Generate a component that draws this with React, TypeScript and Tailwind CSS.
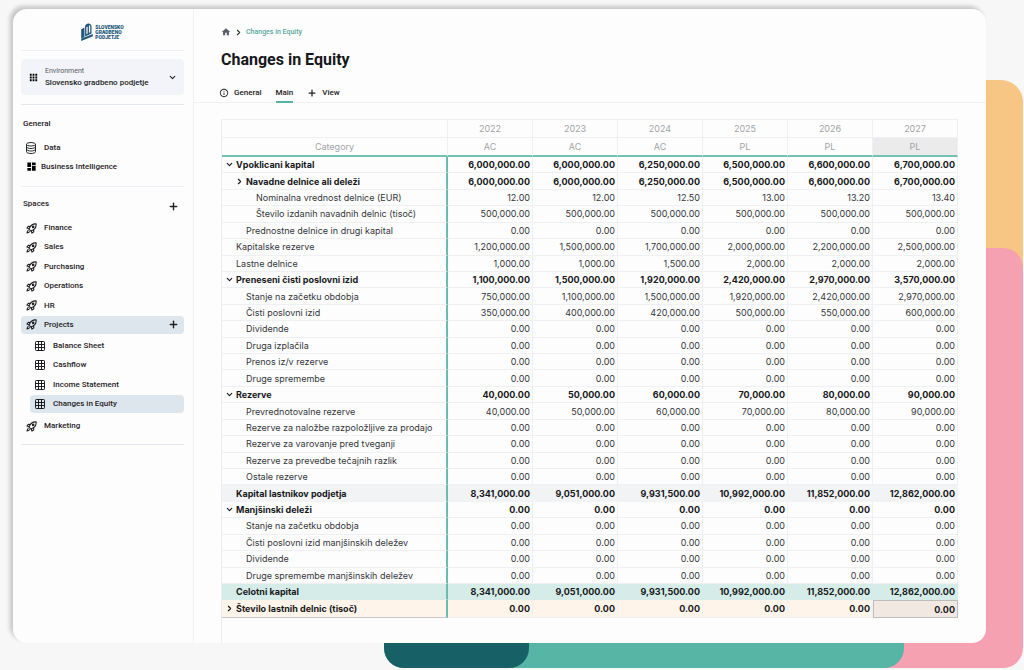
import React from "react";
import { MdApps, MdDashboard, MdHome, MdInfoOutline } from "react-icons/md";
import { ChevronDown, ChevronRight, Plus } from "lucide-react";

type Chevron = "open" | "closed";
type Tone = "plain" | "subtotal" | "total" | "note";

interface Row {
  label: string;
  level: 0 | 1 | 2;
  values: string[];
  bold?: boolean;
  chevron?: Chevron;
  tone?: Tone;
}

const zeros = ["0.00", "0.00", "0.00", "0.00", "0.00", "0.00"];
const equity = ["6,000,000.00", "6,000,000.00", "6,250,000.00", "6,500,000.00", "6,600,000.00", "6,700,000.00"];
const totals = ["8,341,000.00", "9,051,000.00", "9,931,500.00", "10,992,000.00", "11,852,000.00", "12,862,000.00"];

const rows: Row[] = [
  { label: "Vpoklicani kapital", level: 0, bold: true, chevron: "open", values: equity },
  { label: "Navadne delnice ali deleži", level: 1, bold: true, chevron: "closed", values: equity },
  { label: "Nominalna vrednost delnice (EUR)", level: 2, values: ["12.00", "12.00", "12.50", "13.00", "13.20", "13.40"] },
  { label: "Število izdanih navadnih delnic (tisoč)", level: 2, values: ["500,000.00", "500,000.00", "500,000.00", "500,000.00", "500,000.00", "500,000.00"] },
  { label: "Prednostne delnice in drugi kapital", level: 1, values: zeros },
  { label: "Kapitalske rezerve", level: 0, values: ["1,200,000.00", "1,500,000.00", "1,700,000.00", "2,000,000.00", "2,200,000.00", "2,500,000.00"] },
  { label: "Lastne delnice", level: 0, values: ["1,000.00", "1,000.00", "1,500.00", "2,000.00", "2,000.00", "2,000.00"] },
  { label: "Preneseni čisti poslovni izid", level: 0, bold: true, chevron: "open", values: ["1,100,000.00", "1,500,000.00", "1,920,000.00", "2,420,000.00", "2,970,000.00", "3,570,000.00"] },
  { label: "Stanje na začetku obdobja", level: 1, values: ["750,000.00", "1,100,000.00", "1,500,000.00", "1,920,000.00", "2,420,000.00", "2,970,000.00"] },
  { label: "Čisti poslovni izid", level: 1, values: ["350,000.00", "400,000.00", "420,000.00", "500,000.00", "550,000.00", "600,000.00"] },
  { label: "Dividende", level: 1, values: zeros },
  { label: "Druga izplačila", level: 1, values: zeros },
  { label: "Prenos iz/v rezerve", level: 1, values: zeros },
  { label: "Druge spremembe", level: 1, values: zeros },
  { label: "Rezerve", level: 0, bold: true, chevron: "open", values: ["40,000.00", "50,000.00", "60,000.00", "70,000.00", "80,000.00", "90,000.00"] },
  { label: "Prevrednotovalne rezerve", level: 1, values: ["40,000.00", "50,000.00", "60,000.00", "70,000.00", "80,000.00", "90,000.00"] },
  { label: "Rezerve za naložbe razpoložljive za prodajo", level: 1, values: zeros },
  { label: "Rezerve za varovanje pred tveganji", level: 1, values: zeros },
  { label: "Rezerve za prevedbe tečajnih razlik", level: 1, values: zeros },
  { label: "Ostale rezerve", level: 1, values: zeros },
  { label: "Kapital lastnikov podjetja", level: 0, bold: true, tone: "subtotal", values: totals },
  { label: "Manjšinski deleži", level: 0, bold: true, chevron: "open", values: zeros },
  { label: "Stanje na začetku obdobja", level: 1, values: zeros },
  { label: "Čisti poslovni izid manjšinskih deležev", level: 1, values: zeros },
  { label: "Dividende", level: 1, values: zeros },
  { label: "Druge spremembe manjšinskih deležev", level: 1, values: zeros },
  { label: "Celotni kapital", level: 0, bold: true, tone: "total", values: totals },
  { label: "Število lastnih delnic (tisoč)", level: 0, bold: true, chevron: "closed", tone: "note", values: zeros },
];

const columns = [
  { year: "2022", kind: "AC" },
  { year: "2023", kind: "AC" },
  { year: "2024", kind: "AC" },
  { year: "2025", kind: "PL" },
  { year: "2026", kind: "PL" },
  { year: "2027", kind: "PL" },
];

const indent = { 0: "pl-[2px]", 1: "pl-[12px]", 2: "pl-[22px]" };
const toneClass: Record<Tone, string> = {
  plain: "",
  subtotal: "bg-[#f2f3f5]",
  total: "bg-[#d5ece8]",
  note: "bg-[#fff4ea]",
};

function Logo() {
  return (
    <a href="#" className="flex items-center gap-[2px] text-[#205578]">
      <svg viewBox="0 0 36 56" className="h-[18px] w-[12px]" fill="currentColor" aria-hidden="true">
        <path d="M0 20 10 14v30L0 48z" />
        <path fillRule="evenodd" d="M12 9C14 3 20 0 26 2c4 1 6 5 6 9v22l-20 9zM16 13v22l4-2V11zM24 9v22l4-2V9c0-3-4-3-4 0z" />
        <path d="M0 49 36 34v7L0 56z" />
      </svg>
      <span className="pt-px text-[5px] leading-[5px] font-black">
        SLOVENSKO
        <br />
        GRADBENO
        <br />
        PODJETJE
      </span>
    </a>
  );
}

function DatabaseIcon() {
  return (
    <svg viewBox="0 0 20 24" className="h-3 w-[10px]" fill="none" stroke="currentColor" strokeWidth="1.9" aria-hidden="true">
      <ellipse cx="10" cy="4.500" rx="9" ry="3.500" />
      <path d="M1 4.500v15c0 2 4 3.500 9 3.500s9-1.500 9-3.500v-15" />
      <path d="M1 9.500c0 2 4 3.500 9 3.500s9-1.500 9-3.500M1 14.500c0 2 4 3.500 9 3.500s9-1.500 9-3.500" />
    </svg>
  );
}

function RocketIcon() {
  return (
    <svg
      viewBox="0 0 24 24"
      className="h-[11px] w-[11px] text-[#1c1d20]"
      fill="none"
      stroke="currentColor"
      strokeWidth="2.4"
      strokeLinejoin="round"
      aria-hidden="true"
    >
      <path d="M22 2c-6-.6-10.500 1.500-13.500 7L6.500 13.500l4 4L15 15.500C20.500 12.500 22.600 8 22 2z" />
      <path d="M9.500 7.500 5 7 2 11l5 1.500M16.500 14.500 17 19l-4 3-1.500-5" />
      <path d="M5.500 16C3 16.500 2.500 19 2.200 21.800 5 21.500 7.500 21 8 18.500" />
      <circle cx="15.500" cy="8.500" r="1.700" />
    </svg>
  );
}

function SheetIcon() {
  return (
    <svg viewBox="0 0 20 20" className="h-[10px] w-[10px] text-[#1c1d20]" fill="none" stroke="currentColor" strokeWidth="2" aria-hidden="true">
      <rect x="1" y="1" width="18" height="18" rx="1.500" />
      <path d="M7 1v18M13 1v18M1 7h18M1 13h18" />
    </svg>
  );
}

function SpaceLink({ label }: { label: string }) {
  return (
    <a href="#" className="flex h-[18px] items-center gap-[7px] pl-[5px]">
      <RocketIcon />
      {label}
    </a>
  );
}

function SheetLink({ label, active }: { label: string; active?: boolean }) {
  return (
    <a
      href="#"
      aria-current={active ? "page" : undefined}
      className={`flex h-[18px] items-center gap-2 rounded pl-[5px] ${active ? "bg-[#dde6ed]" : ""}`}
    >
      <SheetIcon />
      {label}
    </a>
  );
}

function Sidebar() {
  return (
    <aside className="w-[181px] shrink-0 border-r border-[#f0f1f4] pr-[9px] pl-2 text-[8px] leading-[10px] font-medium text-[#1f2124]">
      <div className="flex h-[42px] items-center justify-center border-b border-[#eceff5] pt-1">
        <Logo />
      </div>
      <div className="border-b border-[#e3e7ee] pt-2 pb-[9px]">
        <button className="flex h-9 w-full items-center rounded bg-[#f3f4f9] pr-[7px] pl-[7px] text-left">
          <MdApps className="h-[11px] w-[11px] text-black" />
          <span className="ml-[6px] flex-1 pb-px">
            <span className="block text-[7px] leading-[11px] font-normal text-[#555b66]">Environment</span>
            <span className="block leading-[11px] text-[#202226]">Slovensko gradbeno podjetje</span>
          </span>
          <ChevronDown className="h-[9px] w-[9px]" strokeWidth={3} />
        </button>
      </div>
      <nav aria-label="General" className="border-b border-[#eceff5] pt-[14px] pb-[10px]">
        <h2 className="pl-[2px]">General</h2>
        <div className="mt-[9px] flex flex-col">
          <a href="#" className="flex h-[19px] items-center gap-2 pl-[5px]">
            <DatabaseIcon />
            Data
          </a>
          <a href="#" className="flex h-[19px] items-center gap-[4px] pl-[5px]">
            <MdDashboard className="h-[11px] w-[11px] text-black" />
            Business Intelligence
          </a>
        </div>
      </nav>
      <nav aria-label="Spaces" className="border-b border-[#e3e7ee] pt-3 pb-[9px]">
        <div className="flex items-start justify-between pr-[5px] pl-[2px]">
          <h2>Spaces</h2>
          <button aria-label="Add space" className="pt-[2px]">
            <Plus className="h-[11px] w-[11px]" strokeWidth={3} />
          </button>
        </div>
        <div className="mt-[7px] flex h-[115px] flex-col justify-between">
          <SpaceLink label="Finance" />
          <SpaceLink label="Sales" />
          <SpaceLink label="Purchasing" />
          <SpaceLink label="Operations" />
          <SpaceLink label="HR" />
          <div className="flex items-center justify-between rounded bg-[#dde6ed] pr-[5px]">
            <SpaceLink label="Projects" />
            <button aria-label="Add to Projects">
              <Plus className="h-[11px] w-[11px]" strokeWidth={3} />
            </button>
          </div>
        </div>
        <div className="mt-[3px] ml-[9px] flex h-[76px] flex-col justify-between">
          <SheetLink label="Balance Sheet" />
          <SheetLink label="Cashflow" />
          <SheetLink label="Income Statement" />
          <SheetLink label="Changes in Equity" active />
        </div>
        <div className="mt-1">
          <SpaceLink label="Marketing" />
        </div>
      </nav>
    </aside>
  );
}

function PageHeader() {
  return (
    <header className="border-b border-[#f0f1f4] pl-[27px]">
      <nav aria-label="Breadcrumb" className="flex items-center gap-[3px] pt-[18px] text-[7px] leading-[10px] font-medium text-[#5aa79b]">
        <a href="#" aria-label="Home">
          <MdHome className="h-[10px] w-[10px] text-[#585d66]" />
        </a>
        <ChevronRight className="h-[9px] w-[9px] text-[#333]" strokeWidth={3} />
        <a href="#">Changes in Equity</a>
      </nav>
      <h1 className="mt-3 text-[16px] leading-[22px] font-bold text-[#17181b]">Changes in Equity</h1>
      <div className="mt-[10px] -mb-px flex h-[22px] text-[8px] leading-[10px] font-medium text-[#1f2124]">
        <button className="-ml-[2px] flex items-center gap-[5px] border-b-2 border-transparent pt-1">
          <MdInfoOutline className="h-[10px] w-[10px]" />
          General
        </button>
        <button className="ml-[14px] border-b-2 border-[#58b2a7] pt-1">Main</button>
        <button className="ml-[14px] flex items-center gap-[5px] border-b-2 border-transparent pt-1">
          <Plus className="h-[10px] w-[10px]" strokeWidth={3} />
          View
        </button>
      </div>
    </header>
  );
}

function EquityTable() {
  return (
    <table className="h-[499px] w-full table-fixed border-separate border-spacing-0 text-[9px] leading-[15px] text-[#34363a]">
      <colgroup>
        <col className="w-[226px]" />
        <col span={6} />
      </colgroup>
      <thead className="text-[#a3a4a7]">
        <tr className="h-[19px]">
          <th className="border-t border-r border-b border-[#eff0f4] p-0" />
          {columns.map((c) => (
            <th key={c.year} scope="col" className="border-t border-r border-b border-[#eff0f4] p-0 font-normal">
              {c.year}
            </th>
          ))}
        </tr>
        <tr className="h-[19px]">
          <th scope="col" className="border-r border-b-2 border-r-[#eff0f4] border-b-[#74c0b5] p-0 font-normal">
            Category
          </th>
          {columns.map((c, i) => (
            <th
              key={c.year}
              className={`border-r border-b-2 border-r-[#eff0f4] border-b-[#74c0b5] p-0 font-normal ${i === 5 ? "bg-[#ebebeb]" : ""}`}
            >
              {c.kind}
            </th>
          ))}
        </tr>
      </thead>
      <tbody>
        {rows.map((row, r) => {
          const tone = row.tone ?? "plain";
          const last = r === rows.length - 1;
          const line = tone === "subtotal" || tone === "total" ? "border-b-transparent" : "border-b-[#eff0f4]";
          return (
            <tr key={r} className={`${toneClass[tone]} ${row.bold ? "font-bold text-[#17181b]" : ""}`}>
              <th
                scope="row"
                className={`border-r-2 border-b border-r-[#6dbab0] p-0 text-left ${row.bold ? "font-bold" : "font-normal"} ${last ? "border-b-[#c9c9c9]" : line}`}
              >
                <div className={`flex items-center gap-[2px] whitespace-nowrap ${indent[row.level]}`}>
                  <span className="flex w-[10px] shrink-0 justify-center">
                    {row.chevron === "open" && <ChevronDown className="h-[9px] w-[9px]" strokeWidth={3} />}
                    {row.chevron === "closed" && <ChevronRight className="h-[9px] w-[9px]" strokeWidth={3} />}
                  </span>
                  {row.label}
                </div>
              </th>
              {row.values.map((v, i) => (
                <td
                  key={i}
                  className={
                    last && i === 5
                      ? "border border-[#bdbdbd] bg-[#f1e8e1] py-0 pr-[2px] pl-0 text-right"
                      : `border-r border-b py-0 pr-[2px] pl-0 text-right ${line} ${tone === "total" || tone === "subtotal" ? "border-r-transparent" : "border-r-[#eff0f4]"}`
                  }
                >
                  {v}
                </td>
              ))}
            </tr>
          );
        })}
      </tbody>
    </table>
  );
}

export default function App() {
  return (
    <div className="relative isolate min-h-screen overflow-hidden bg-[#f7f7f7] pt-[9px] pr-[38px] pb-[27px] pl-[13px] font-[Roboto,'Liberation_Sans',sans-serif]">
      <div aria-hidden="true" className="absolute top-20 right-px bottom-10 -z-10 w-[120px] rounded-[22px] bg-[#f7c684]" />
      <div aria-hidden="true" className="absolute top-[248px] right-px bottom-[2px] -z-10 w-[240px] rounded-[20px] bg-[#f5a1b1]" />
      <div aria-hidden="true" className="absolute right-[120px] bottom-[2px] left-[384px] -z-10 h-20 rounded-[20px] bg-[#56b5a4]" />
      <div aria-hidden="true" className="absolute bottom-[2px] left-[384px] -z-10 h-20 w-[145px] rounded-[20px] bg-[#176065]" />
      <div className="flex rounded-[14px] bg-[#fdfdfd] shadow-[-3px_-3px_4px_rgba(0,0,0,0.2)]">
        <Sidebar />
        <main className="flex min-w-0 flex-1 flex-col">
          <PageHeader />
          <div className="pt-4 pr-7 pl-[27px]">
            <div className="border-l border-[#eceef2] pb-[25px] font-[Inter,'Liberation_Sans',sans-serif]">
              <EquityTable />
            </div>
          </div>
        </main>
      </div>
    </div>
  );
}
